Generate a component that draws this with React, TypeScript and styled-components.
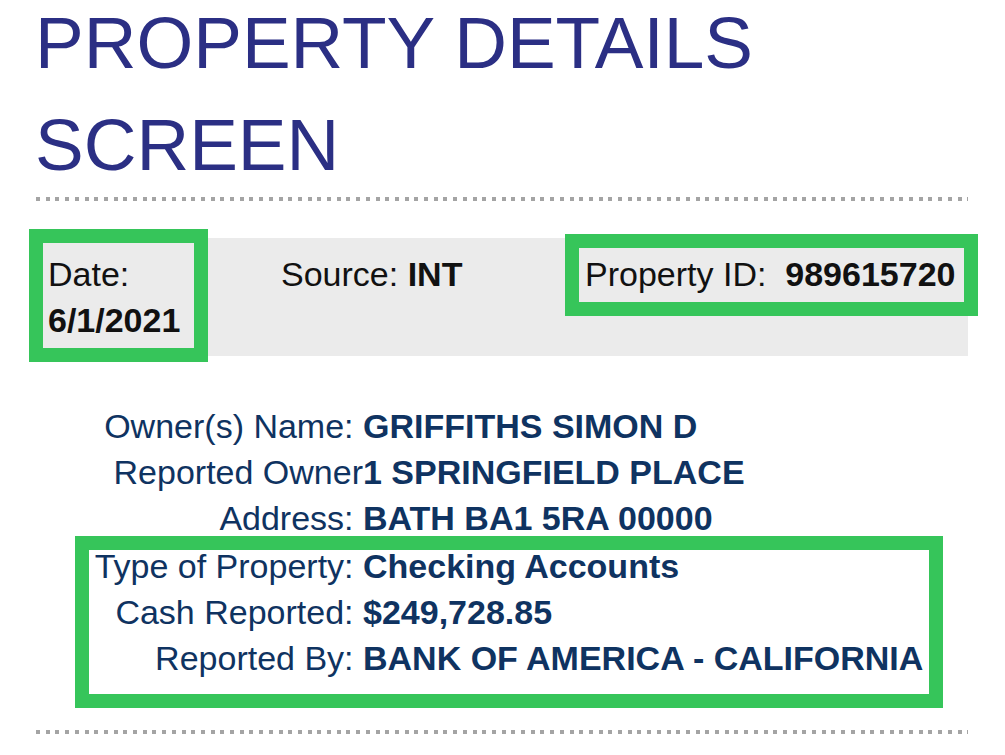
import React from 'react';
import styled, { createGlobalStyle } from 'styled-components';

const GlobalStyle = createGlobalStyle`
    body {
        margin: 0;
        background: #ffffff;
        font-family: "Liberation Sans", Arial, sans-serif;
    }
`;

const green = '#36c55a';
const navy = '#0f3361';

const Page = styled.div`
    width: 932px;
    padding-left: 36px;
`;

const Title = styled.h1`
    margin: -8px 0 0 -1px;
    font-size: 73px;
    line-height: 102px;
    font-weight: 400;
    color: #2b2f84;
`;

const Divider = styled.div<{ top: number }>`
    height: 4px;
    margin-top: ${({ top }) => top}px;
    background: repeating-linear-gradient(to right, #a4a4a4 0 4px, transparent 4px 9.7px);
`;

const Band = styled.div`
    display: flex;
    align-items: flex-start;
    height: 118px;
    margin-top: 37px;
    background: #ebebeb;
    font-size: 34px;
    line-height: 46px;
    color: #111111;
`;

const Marked = styled.div`
    border: 14px solid ${green};
    box-sizing: border-box;
`;

const DateBox = styled(Marked)`
    width: 179px;
    margin: -9px 0 0 -7px;
    padding: 8px 0 5px 5px;
`;

const Source = styled.div`
    margin-left: 73px;
    padding-top: 13px;
`;

const PropertyBox = styled(Marked)`
    width: 413px;
    margin: -4px -10px 0 auto;
    padding: 3px 0 5px 6px;
    white-space: nowrap;
`;

const Details = styled.div<{ labelWidth: number }>`
    display: grid;
    grid-template-columns: ${({ labelWidth }) => labelWidth}px auto;
    font-size: 34px;
    line-height: 46px;
    color: ${navy};
`;

const Owner = styled(Details)`
    margin-top: 47px;
`;

const Highlight = styled(Marked)`
    width: 868px;
    margin: -5px 0 0 39px;
    padding-bottom: 13px;
`;

const Reported = styled(Details)`
    margin-top: -7px;
`;

const Label = styled.span`
    text-align: right;
    white-space: nowrap;
`;

const Value = styled.b`
    white-space: nowrap;
`;

const rows = (items: [string, string][]) =>
    items.map(([label, value]) => (
        <React.Fragment key={label}>
            <Label>{label}</Label>
            <Value>{value}</Value>
        </React.Fragment>
    ));

export default function App() {
    return (
        <Page>
            <GlobalStyle />
            <Title>PROPERTY DETAILS<br />SCREEN</Title>
            <Divider top={1} />
            <Band>
                <DateBox>
                    Date:<br /><b>6/1/2021</b>
                </DateBox>
                <Source>Source: <b>INT</b></Source>
                <PropertyBox>Property ID:{'\u00A0'} <b>989615720</b></PropertyBox>
            </Band>
            <Owner labelWidth={327}>
                {rows([
                    ['Owner(s) Name:\u00A0', 'GRIFFITHS SIMON D'],
                    ['Reported Owner', '1 SPRINGFIELD PLACE'],
                    ['Address:\u00A0', 'BATH BA1 5RA 00000'],
                ])}
            </Owner>
            <Highlight>
                <Reported labelWidth={274}>
                    {rows([
                        ['Type of Property:\u00A0', 'Checking Accounts'],
                        ['Cash Reported:\u00A0', '$249,728.85'],
                        ['Reported By:\u00A0', 'BANK OF AMERICA - CALIFORNIA'],
                    ])}
                </Reported>
            </Highlight>
            <Divider top={22} />
        </Page>
    );
}
